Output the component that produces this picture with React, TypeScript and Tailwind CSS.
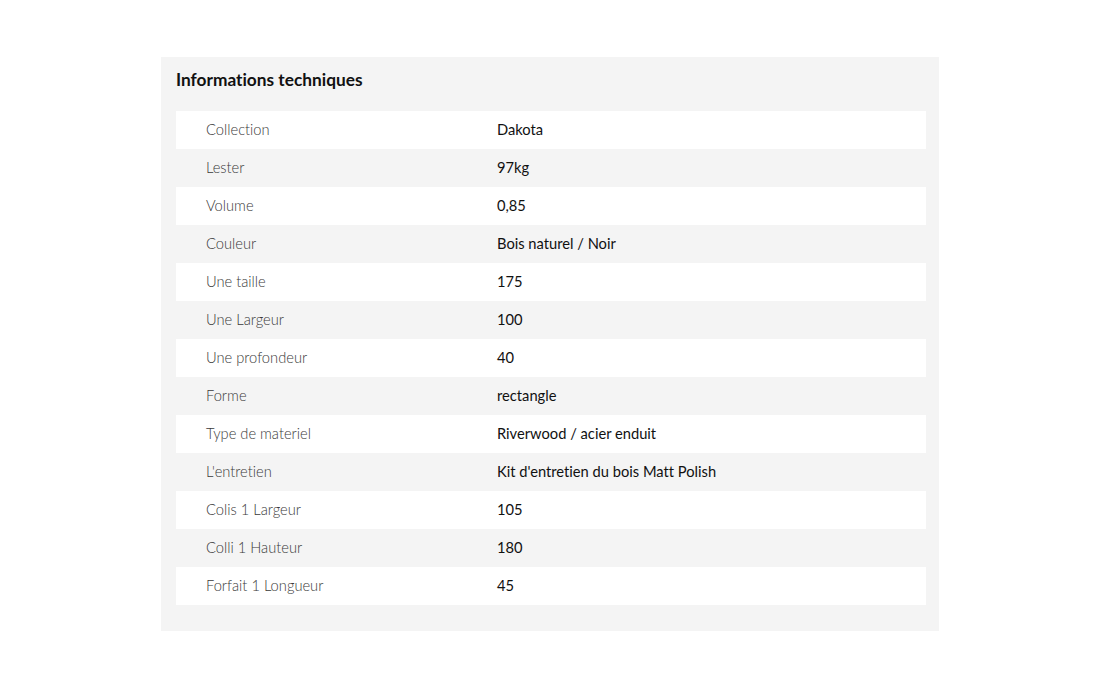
import React from 'react';

const specs: [string, string][] = [
  ['Collection', 'Dakota'],
  ['Lester', '97kg'],
  ['Volume', '0,85'],
  ['Couleur', 'Bois naturel / Noir'],
  ['Une taille', '175'],
  ['Une Largeur', '100'],
  ['Une profondeur', '40'],
  ['Forme', 'rectangle'],
  ['Type de materiel', 'Riverwood / acier enduit'],
  ["L'entretien", "Kit d'entretien du bois Matt Polish"],
  ['Colis 1 Largeur', '105'],
  ['Colli 1 Hauteur', '180'],
  ['Forfait 1 Longueur', '45'],
];

export default function App() {
  return (
    <div className="min-h-[688px] w-full bg-white pt-[57px] font-['Lato','Open_Sans',sans-serif] [font-variant-ligatures:none]">
      <div className="mx-auto w-[778px] bg-[#f4f4f4] pb-[26px] pl-[15px] pr-[13px]">
        <h2 className="pb-[17px] pt-[9px] text-[17.3px] font-bold leading-[28px] text-[#111]">
          Informations techniques
        </h2>
        <div>
          {specs.map(([label, value], i) => (
            <div
              key={label}
              className={`flex h-[38px] items-center pb-[2px] text-[14.7px] ${i % 2 === 0 ? 'bg-white' : 'bg-[#f4f4f4]'}`}
            >
              <div className="w-[321px] pl-[30px] font-light text-[#3a3a3a]">{label}</div>
              <div className="flex-1 text-[#111]">{value}</div>
            </div>
          ))}
        </div>
      </div>
    </div>
  );
}
